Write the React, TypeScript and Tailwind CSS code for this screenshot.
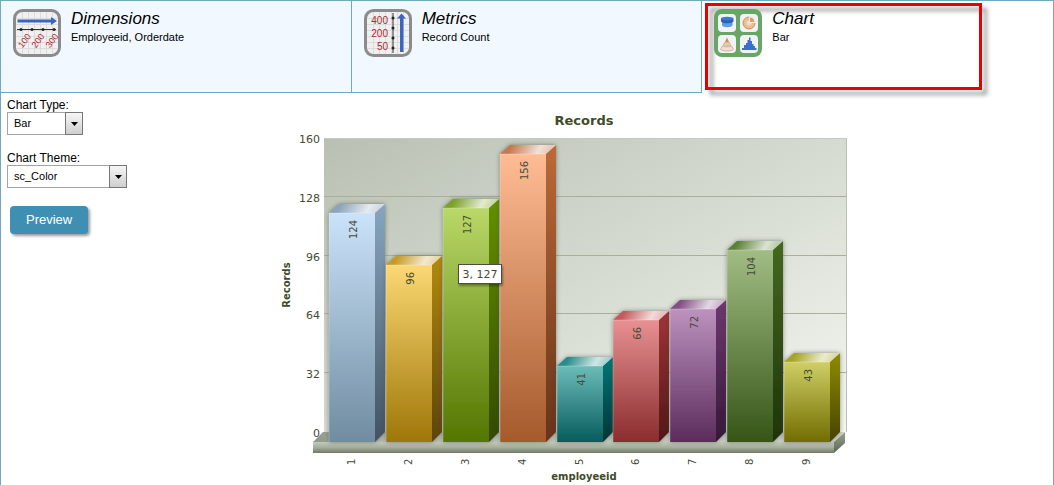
import { useState } from "react";

type Bar = {
  id: number;
  value: number;
  front: [string, string];
  side: [string, string];
  top: string;
};

const bars: Bar[] = [
  { id: 1, value: 124, front: ["#cbe3fa", "#708ca1"], side: ["#88a6c0", "#425261"], top: "#7d9ab3" },
  { id: 2, value: 96, front: ["#fbd873", "#9e7709"], side: ["#b48a10", "#5b430d"], top: "#c08f0c" },
  { id: 3, value: 127, front: ["#b9d868", "#547600"], side: ["#659000", "#324a00"], top: "#6c9708" },
  { id: 4, value: 156, front: ["#ffbc94", "#a55a2b"], side: ["#bb6a37", "#66331a"], top: "#bd6a3a" },
  { id: 5, value: 41, front: ["#6cbcb9", "#055c5c"], side: ["#067876", "#023536"], top: "#077f7e" },
  { id: 6, value: 66, front: ["#e89192", "#8a2c2e"], side: ["#a03436", "#501718"], top: "#c04548" },
  { id: 7, value: 72, front: ["#bd92bf", "#5a2c5b"], side: ["#6e386f", "#35183a"], top: "#743b78" },
  { id: 8, value: 104, front: ["#a1bd84", "#365517"], side: ["#44691f", "#1e330b"], top: "#487522" },
  { id: 9, value: 43, front: ["#cfcf66", "#716d00"], side: ["#8f8c00", "#464300"], top: "#9c9908" },
];

const ticks = [0, 32, 64, 96, 128, 160];
const depth = 10;
const barWidth = 46;
const floorY = 442;

function yOf(value: number) {
  return 432 - (value * 294) / 160;
}

function xOf(index: number) {
  return Math.round(329 + (index * 455) / 8);
}

function RecordsChart() {
  return (
    <svg
      viewBox="275 93 580 392"
      className="h-[392px] w-[580px] shrink-0"
      role="img"
      aria-label="Records by employeeid"
      fontFamily="'DejaVu Sans', Verdana, sans-serif"
      fill="#454b36"
    >
      <defs>
        <linearGradient id="wall" x1="0" y1="0" x2="1" y2="1">
          <stop offset="0" stopColor="#b9c0b3" />
          <stop offset="0.5" stopColor="#d5dbd1" />
          <stop offset="1" stopColor="#f4f6f1" />
        </linearGradient>
        <linearGradient id="floorTop" x1="0" y1="0" x2="1" y2="0">
          <stop offset="0" stopColor="#8f9987" />
          <stop offset="0.12" stopColor="#b4bbae" />
          <stop offset="1" stopColor="#cfd4ca" />
        </linearGradient>
        <linearGradient id="floorFront" x1="0" y1="0" x2="0" y2="1">
          <stop offset="0" stopColor="#c3cab9" />
          <stop offset="0.5" stopColor="#a5ae9b" />
          <stop offset="1" stopColor="#727967" />
        </linearGradient>
        <linearGradient id="floorSide" x1="0" y1="0" x2="0" y2="1">
          <stop offset="0" stopColor="#99a291" />
          <stop offset="1" stopColor="#5d6554" />
        </linearGradient>
        <filter id="barShadow" x="-20%" y="-20%" width="140%" height="140%">
          <feDropShadow dx="0" dy="0" stdDeviation="2" floodColor="#3f4438" floodOpacity="0.6" />
        </filter>
        <filter id="tipShadow" x="-20%" y="-30%" width="150%" height="180%">
          <feDropShadow dx="1" dy="2" stdDeviation="1" floodColor="#000" floodOpacity="0.35" />
        </filter>
        <linearGradient id="gloss" gradientUnits="userSpaceOnUse" x1="12" y1="-9" x2="42" y2="8">
          <stop offset="0" stopColor="#ffffff" stopOpacity="0.1" />
          <stop offset="0.75" stopColor="#ffffff" stopOpacity="0.8" />
          <stop offset="1" stopColor="#ffffff" stopOpacity="0.65" />
        </linearGradient>
        {bars.map((b) => (
          <g key={b.id}>
            <linearGradient id={`front${b.id}`} x1="0" y1="0" x2="0" y2="1">
              <stop offset="0" stopColor={b.front[0]} />
              <stop offset="1" stopColor={b.front[1]} />
            </linearGradient>
            <linearGradient id={`side${b.id}`} x1="0" y1="0" x2="0" y2="1">
              <stop offset="0" stopColor={b.side[0]} />
              <stop offset="1" stopColor={b.side[1]} />
            </linearGradient>
          </g>
        ))}
      </defs>

      <text x="584" y="125" fontSize="13" fontWeight="700" textAnchor="middle" fill="#3f4c28">
        Records
      </text>

      <rect x="324" y="138" width="522" height="294" fill="url(#wall)" />
      <path d="M846.5 138V432" stroke="#b9c0ae" />
      <path d="M324 138.500H846" stroke="#c5cabd" />
      {ticks.slice(1, 5).map((t) => (
        <path key={t} d={`M324 ${Math.round(yOf(t)) - 0.5}H846`} stroke="#a9b097" />
      ))}
      {ticks.map((t) => (
        <text key={t} x="320" y={Math.round(yOf(t)) + 5} fontSize="11" textAnchor="end">
          {t}
        </text>
      ))}

      <path d="M313 442L323 432H845L834 442Z" fill="url(#floorTop)" />
      <path d="M834 442L845 432V443L834 453Z" fill="url(#floorSide)" />
      <rect x="313" y="442" width="521" height="11" fill="url(#floorFront)" />

      {bars.map((b, i) => {
        const x = xOf(i);
        const y = Math.round(yOf(b.value)) + 9;
        const r = x + barWidth;
        return (
          <g key={b.id}>
            <g filter="url(#barShadow)">
              <path d={`M${x} ${y}L${x + depth} ${y - 9}H${r + depth}L${r} ${y}Z`} fill={b.top} />
              <path
                d={`M${r} ${y}L${r + depth} ${y - 9}V${floorY - 10}L${r} ${floorY}Z`}
                fill={`url(#side${b.id})`}
              />
              <rect x={x} y={y} width={barWidth} height={floorY - y} fill={`url(#front${b.id})`} />
            </g>
            <path
              transform={`translate(${x} ${y})`}
              d={`M0 0L${depth} -9H${barWidth + depth}L${barWidth} 0Z`}
              fill="url(#gloss)"
            />
            <path d={`M${x} ${floorY}V${y}H${r}`} fill="none" stroke="#fff" strokeOpacity="0.25" />
            <text
              transform={`translate(${x + 28} ${y + 7}) rotate(-90)`}
              fontSize="10"
              textAnchor="end"
            >
              {b.value}
            </text>
            <text transform={`translate(${x + 26} 465) rotate(-90)`} fontSize="10">
              {b.id}
            </text>
          </g>
        );
      })}

      <text transform="translate(290 285) rotate(-90)" fontSize="10" fontWeight="700" textAnchor="middle" fill="#3f4c28">
        Records
      </text>
      <text x="584" y="480" fontSize="10" fontWeight="700" textAnchor="middle" fill="#3f4c28">
        employeeid
      </text>

      <g filter="url(#tipShadow)">
        <rect x="458.500" y="264.500" width="43" height="19" fill="#fff" stroke="#4b4b4b" />
      </g>
      <text x="480" y="278" fontSize="11" textAnchor="middle">
        3, 127
      </text>
    </svg>
  );
}

function Paper() {
  return (
    <>
      <rect x="1.500" y="1.500" width="45" height="45" rx="8" fill="#f0f0f0" stroke="#8b8b8b" strokeWidth="3" />
      <path
        d="M9.500 3v42M15.500 3v42M21.500 3v42M27.500 3v42M33.500 3v42M39.500 3v42M3 9.500h42M3 15.500h42M3 21.500h42M3 27.500h42M3 33.500h42M3 39.500h42"
        stroke="#dcdcdc"
      />
    </>
  );
}

function DimensionsIcon() {
  return (
    <svg viewBox="0 0 48 48" className="size-12 shrink-0" aria-hidden="true">
      <Paper />
      <path d="M4.500 10.500H38V8l6 4-6 4v-2.500H4.500Z" fill="#3c66bd" />
      <path d="M4 20.500H43" stroke="#333" />
      <g fill="#222">
        <circle cx="8" cy="20.500" r="1.500" />
        <circle cx="19" cy="20.500" r="1.500" />
        <circle cx="30" cy="20.500" r="1.500" />
        <circle cx="41" cy="20.500" r="1.500" />
      </g>
      <g fill="#a82c30" fontSize="9" fontFamily="'Liberation Sans', Arial, sans-serif">
        <text transform="translate(9.500 39.500) rotate(-54)">100</text>
        <text transform="translate(23 39.500) rotate(-54)">200</text>
        <text transform="translate(37 39.500) rotate(-54)">300</text>
      </g>
    </svg>
  );
}

function MetricsIcon() {
  return (
    <svg viewBox="0 0 48 48" className="size-12 shrink-0" aria-hidden="true">
      <Paper />
      <path d="M36 43V9.500H33L37.500 4.500 42 9.500H39.500V43Z" fill="#3c66bd" />
      <path d="M29 4V44" stroke="#333" />
      <g fill="#222">
        <circle cx="29" cy="9" r="1.500" />
        <circle cx="29" cy="19" r="1.500" />
        <circle cx="29" cy="29" r="1.500" />
        <circle cx="29" cy="39" r="1.500" />
      </g>
      <g fill="#a82c30" fontSize="10" textAnchor="end" fontFamily="'Liberation Sans', Arial, sans-serif">
        <text x="24" y="15">400</text>
        <text x="24" y="28">200</text>
        <text x="24" y="41">50</text>
      </g>
    </svg>
  );
}

function ChartIcon() {
  return (
    <svg viewBox="0 0 48 48" className="size-12 shrink-0" aria-hidden="true">
      <rect width="48" height="48" rx="8" fill="#67a665" />
      <g fill="#f0f2f6">
        <rect x="4" y="5" width="18" height="18" rx="4" />
        <rect x="26" y="5" width="18" height="18" rx="4" />
        <rect x="4" y="26" width="18" height="18" rx="4" />
        <rect x="26" y="26" width="18" height="18" rx="4" />
      </g>
      <path d="M8 12v4c0 3 10.500 3 10.500 0v-4Z" fill="#5e9ae6" />
      <path d="M7 9.500v2.500c0 3 12.500 3 12.500 0V9.500Z" fill="#2f5fb5" />
      <ellipse cx="13.200" cy="9.500" rx="6.200" ry="1.800" fill="#3f7ad2" />
      <circle cx="35" cy="14" r="6" fill="#eebf8e" stroke="#b9804f" strokeWidth="0.800" />
      <circle cx="35" cy="14" r="2.500" fill="#f5dcc0" />
      <path d="M35 14V7.200A6.800 6.800 0 0 1 41.800 14Z" fill="#f0f2f6" />
      <path d="M36 13V8.500A4.500 4.500 0 0 1 40.500 13Z" fill="#df9f62" />
      <path d="M13 28.500L15 33H11Z" fill="#c98f62" />
      <path d="M10.500 33.500h5l1.300 2.800c-1.600 1-6 1-7.600 0Z" fill="#ecc9a8" stroke="#c89a78" strokeWidth="0.600" />
      <path d="M8.300 37c2 1.100 7.400 1.100 9.400 0l1.800 3.500c-2.500 2-10.500 2-13 0Z" fill="#f3ddcf" stroke="#c3a08c" strokeWidth="0.700" />
      <path
        d="M28 41v-2h2v-3h2v-2h1.500v-3H35v-2.500h1.500V32H38v3h1.500v2H41v2h1.500v2Z"
        fill="#3a70cc"
      />
    </svg>
  );
}

const tabs = [
  { title: "Dimensions", detail: "Employeeid, Orderdate", Icon: DimensionsIcon },
  { title: "Metrics", detail: "Record Count", Icon: MetricsIcon },
  { title: "Chart", detail: "Bar", Icon: ChartIcon },
];

function Picker({ id, label, options, width }: { id: string; label: string; options: string[]; width: string }) {
  return (
    <div>
      <label htmlFor={id} className="block text-xs leading-[14px]">
        {label}
      </label>
      <div className={`relative h-[23px] ${width}`}>
        <select
          id={id}
          className="block size-full appearance-none border border-[#a3a3a3] bg-white pr-5 pl-1.5 text-[11px] outline-none"
        >
          {options.map((o) => (
            <option key={o}>{o}</option>
          ))}
        </select>
        <span className="pointer-events-none absolute inset-y-0 right-0 flex w-[18px] items-center justify-center border border-[#777] bg-linear-to-b from-[#f6f6f6] to-[#cfcfcf]">
          <svg viewBox="0 0 7 4" className="h-1 w-[7px]" aria-hidden="true">
            <path d="M0 0h7L3.500 4Z" fill="#000" />
          </svg>
        </span>
      </div>
    </div>
  );
}

export default function App() {
  const [active, setActive] = useState("Chart");

  return (
    <div className="flex min-h-screen flex-col border-x border-t border-[#71a9be] bg-white font-['Liberation_Sans',Arial,sans-serif] text-black">
      <div role="tablist" className="grid grid-cols-3">
        {tabs.map(({ title, detail, Icon }) => {
          const selected = title === active;
          return (
            <button
              key={title}
              type="button"
              role="tab"
              aria-selected={selected}
              onClick={() => setActive(title)}
              className={`relative flex h-[92px] items-start gap-2.5 pt-2 pl-3 text-left ${
                selected ? "bg-white" : "border-r border-b border-[#71a9be] bg-[#f2f8ff]"
              }`}
            >
              {selected && (
                <span className="absolute top-0.5 right-[71px] bottom-[3px] left-[3px] border-3 border-[#e60000] drop-shadow-[5px_5px_2px_rgba(0,0,0,0.4)]" />
              )}
              <span className="relative">
                <Icon />
              </span>
              <span className="relative">
                <span className="block text-[17px] leading-5 italic">{title}</span>
                <span className="block text-[11px] leading-4">{detail}</span>
              </span>
            </button>
          );
        })}
      </div>

      <main className="flex flex-1 items-start">
        <form className="flex w-[274px] shrink-0 flex-col items-start gap-4 pt-[5px] pl-1.5" onSubmit={(e) => e.preventDefault()}>
          <Picker id="chart-type" label="Chart Type:" options={["Bar", "Line", "Pie"]} width="w-[76px]" />
          <Picker id="chart-theme" label="Chart Theme:" options={["sc_Color"]} width="w-[120px]" />
          <button
            type="submit"
            className="mt-0.5 ml-[3px] h-7 rounded-sm bg-[#3f8fb3] px-4 text-[13px] text-white shadow-[2px_2px_3px_rgba(0,0,0,0.4)]"
          >
            Preview
          </button>
        </form>
        <RecordsChart />
      </main>
    </div>
  );
}
